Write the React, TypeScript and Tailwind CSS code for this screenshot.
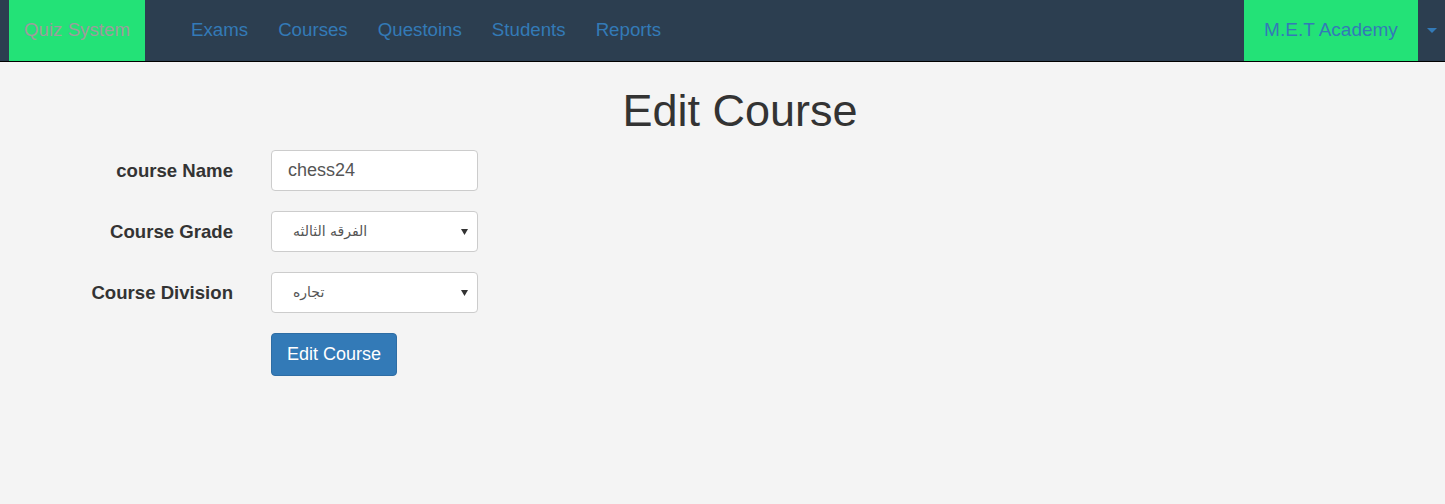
import React from "react";

const font = { fontFamily: '"Liberation Sans", Arial, sans-serif' };

function SelectBox({ value }: { value: string }) {
  return (
    <div className="relative w-[207px] h-[41px] bg-white border border-[#cccccc] rounded-[4px] flex items-center">
      <span dir="rtl" className="pl-[21px] text-[14px] text-[#555555]" style={{ fontFamily: '"DejaVu Sans", "Noto Sans", sans-serif' }}>
        {value}
      </span>
      <svg className="absolute right-[9px] top-[17px]" width="7" height="6" viewBox="0 0 7 6">
        <path d="M0 0 L7 0 L3.5 6 Z" fill="#333" />
      </svg>
    </div>
  );
}

export default function App() {
  return (
    <div className="min-h-[504px] bg-[#f4f4f4] text-[#333333]" style={font}>
      <nav className="h-[62px] bg-[#2c3e50] border-b border-black flex items-stretch">
        <div className="ml-[9px] w-[136px] bg-[#23e277] flex items-center justify-center text-[18.7px] text-[#9d9d9d]">
          Quiz System
        </div>
        <ul className="flex items-center ml-[31px] text-[18.7px] text-[#337ab7]">
          <li className="px-[15px]">Exams</li>
          <li className="px-[15px]">Courses</li>
          <li className="px-[15px]">Questoins</li>
          <li className="px-[15px]">Students</li>
          <li className="px-[15px]">Reports</li>
        </ul>
        <div className="ml-auto flex items-stretch">
          <div className="w-[174px] bg-[#23e277] flex items-center justify-center text-[19px] text-[#337ab7]">
            M.E.T Academy
          </div>
          <div className="w-[27px] flex items-center justify-center">
            <svg width="10" height="5" viewBox="0 0 10 5">
              <path d="M0 0 L10 0 L5 5 Z" fill="#337ab7" />
            </svg>
          </div>
        </div>
      </nav>

      <h1 className="mt-[24px] text-center text-[45px] leading-[50px] font-normal pl-[35px]">Edit Course</h1>

      <form className="mt-[14px] flex flex-col gap-[20px]">
        <div className="flex items-center">
          <label className="w-[233px] text-right font-bold text-[18.6px]">course Name</label>
          <div className="ml-[38px] w-[207px] h-[41px] bg-white border border-[#cccccc] rounded-[4px] flex items-center pl-[16px] text-[18px] text-[#555555]">
            chess24
          </div>
        </div>
        <div className="flex items-center">
          <label className="w-[233px] text-right font-bold text-[18.6px]">Course Grade</label>
          <div className="ml-[38px]">
            <SelectBox value="الفرقه الثالثه" />
          </div>
        </div>
        <div className="flex items-center">
          <label className="w-[233px] text-right font-bold text-[18.6px]">Course Division</label>
          <div className="ml-[38px]">
            <SelectBox value="تجاره" />
          </div>
        </div>
        <div className="flex items-center">
          <div className="w-[233px]" />
          <button
            type="button"
            className="ml-[38px] h-[43px] px-[15px] bg-[#337ab7] border border-[#2e6da4] rounded-[4px] text-white text-[18px]"
          >
            Edit Course
          </button>
        </div>
      </form>
    </div>
  );
}
